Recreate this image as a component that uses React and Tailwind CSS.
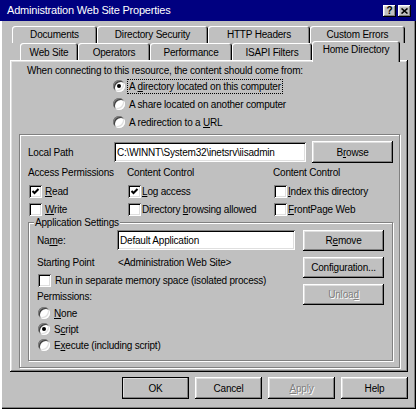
import React from 'react';

const raised =
  'shadow-[inset_-1px_-1px_0_#000,inset_1px_1px_0_#fff,inset_-2px_-2px_0_#808080,inset_2px_2px_0_#dfdfdf]';
const sunken =
  'shadow-[inset_1px_1px_0_#808080,inset_-1px_-1px_0_#fff,inset_2px_2px_0_#000,inset_-2px_-2px_0_#dfdfdf]';
const etched = 'border border-[#808080] shadow-[1px_1px_0_#fff,inset_1px_1px_0_#fff]';
const tabShadow = 'shadow-[inset_1px_1px_0_#fff,inset_-1px_0_0_#000,inset_-2px_0_0_#808080]';

function Button({ className = '', children, disabled, isDefault }) {
  return (
    <div
      className={`flex items-center justify-center bg-[#c0c0c0] ${raised} ${
        isDefault ? 'outline-1 outline-black -outline-offset-1' : ''
      } ${disabled ? 'text-[#808080] [text-shadow:1px_1px_0_#fff]' : ''} ${className}`}
    >
      {children}
    </div>
  );
}

function Check({ checked }) {
  return (
    <span className={`w-[13px] h-[13px] shrink-0 bg-white ${sunken} flex items-center justify-center`}>
      {checked && (
        <svg width="9" height="9" viewBox="0 0 9 9">
          <polyline points="1.5,4 3.5,6 7.5,2" fill="none" stroke="#000" strokeWidth="2" />
        </svg>
      )}
    </span>
  );
}

function Radio({ on }) {
  return (
    <span
      className="w-[12px] h-[12px] shrink-0 rounded-full bg-white flex items-center justify-center shadow-[inset_1px_1px_0_#808080,inset_-1px_-1px_0_#fff,inset_2px_2px_0_#404040,inset_-2px_-2px_0_#dfdfdf]"
    >
      {on && <span className="w-[4px] h-[4px] rounded-full bg-black" />}
    </span>
  );
}

function Tab({ className = '', children }) {
  return (
    <div className={`flex items-center justify-center rounded-t-[3px] bg-[#c0c0c0] ${tabShadow} ${className}`}>
      {children}
    </div>
  );
}

export default function App() {
  return (
    <div className="w-[416px] h-[409px] bg-[#c0c0c0] flex flex-col overflow-hidden font-['Liberation_Sans',Arial,sans-serif] text-[10px] leading-[13px] tracking-[-0.2px] text-black shadow-[inset_2px_0_0_#fff,inset_-1px_-1px_0_#000,inset_-2px_-2px_0_#808080]">
      {/* title bar */}
      <div className="h-[21px] shrink-0 bg-[#000080] flex items-center pl-[7px] pr-[5px] text-white">
        <span className="flex-1 text-[11px]">Administration Web Site Properties</span>
        <div className="flex gap-[2px]">
          <div className={`w-[13px] h-[12px] bg-[#c0c0c0] ${raised} flex items-center justify-center text-black font-bold text-[10px] leading-none`}>
            ?
          </div>
          <div className={`w-[13px] h-[12px] bg-[#c0c0c0] ${raised} flex items-center justify-center`}>
            <svg width="7" height="6" viewBox="0 0 7 6">
              <path d="M0.5 0.5 L6.5 5.5 M6.5 0.5 L0.5 5.5" stroke="#000" strokeWidth="1.6" />
            </svg>
          </div>
        </div>
      </div>

      <div className="pl-[10px] pt-[5px] flex flex-col">
        {/* back row of tabs */}
        <div className="flex ml-[2px] h-[17px]">
          <Tab className="w-[85px] h-[17px] pb-[1px]">Documents</Tab>
          <Tab className="w-[111px] h-[17px] pb-[1px]">Directory Security</Tab>
          <Tab className="w-[102px] h-[17px] pb-[1px]">HTTP Headers</Tab>
          <Tab className="w-[95px] h-[17px] pb-[1px]">Custom Errors</Tab>
        </div>
        {/* front row of tabs */}
        <div className="flex ml-[10px] h-[17px] items-end">
          <Tab className="w-[58px] h-[17px] pt-[2px]">Web Site</Tab>
          <Tab className="w-[72px] h-[17px] pt-[2px]">Operators</Tab>
          <Tab className="w-[82px] h-[17px] pt-[2px]">Performance</Tab>
          <Tab className="w-[80px] h-[17px] pt-[2px]">ISAPI Filters</Tab>
          <Tab className="relative z-10 w-[88px] h-[21px] -mb-[2px] pb-[4px]">Home Directory</Tab>
        </div>

        {/* tab page */}
        <div className={`relative w-[398px] h-[312px] flex flex-col ${raised}`}>
          <div className="pl-[17px] pt-[4px]">When connecting to this resource, the content should come from:</div>
          <div className="flex flex-col pl-[103px]">
            <div className="h-[18px] flex items-center gap-[3px]">
              <Radio on />
              <span className="px-[1px] [outline:1px_dotted_#000]">
                A <u>d</u>irectory located on this computer
              </span>
            </div>
            <div className="h-[18px] flex items-center gap-[3px]">
              <Radio />
              <span className="px-[1px]">A share located on another computer</span>
            </div>
            <div className="h-[18px] flex items-center gap-[3px]">
              <Radio />
              <span className="px-[1px]">
                A redirection to a <u>U</u>RL
              </span>
            </div>
          </div>

          {/* directory group */}
          <div className={`ml-[9px] mt-[3px] w-[381px] h-[234px] flex flex-col pl-[8px] pt-[6px] ${etched}`}>
            <div className="h-[22px] flex items-center">
              <span className="w-[86px]">Local Path</span>
              <div className={`w-[192px] h-[20px] bg-white ${sunken} flex items-center pl-[3px]`}>
                C:\WINNT\System32\inetsrv\iisadmin
              </div>
              <Button className="ml-[6px] w-[81px] h-[22px]">
                B<u>r</u>owse
              </Button>
            </div>

            <div className="mt-[3px] h-[13px] grid grid-cols-[99px_146px_1fr]">
              <span>Access Permissions</span>
              <span>Content Control</span>
              <span>Content Control</span>
            </div>
            <div className="mt-[3px] grid grid-cols-[99px_146px_1fr] pl-[1px]">
              <div className="h-[18px] flex items-center gap-[3px]">
                <Check checked />
                <span>
                  <u>R</u>ead
                </span>
              </div>
              <div className="h-[18px] flex items-center gap-[1px]">
                <Check checked />
                <span>
                  <u>L</u>og access
                </span>
              </div>
              <div className="h-[18px] flex items-center gap-[1px]">
                <Check />
                <span>
                  <u>I</u>ndex this directory
                </span>
              </div>
              <div className="h-[18px] flex items-center gap-[3px]">
                <Check />
                <span>
                  <u>W</u>rite
                </span>
              </div>
              <div className="h-[18px] flex items-center gap-[1px]">
                <Check />
                <span>
                  Directory <u>b</u>rowsing allowed
                </span>
              </div>
              <div className="h-[18px] flex items-center gap-[1px]">
                <Check />
                <span>
                  <u>F</u>rontPage Web
                </span>
              </div>
            </div>

            {/* application settings */}
            <div className={`relative mt-[4px] w-[365px] h-[139px] flex pt-[7px] pl-[8px] ${etched}`}>
              <span className="absolute -top-[7px] left-[5px] px-[1px] bg-[#c0c0c0]">Application Settings</span>
              <div className="w-[266px] flex flex-col">
                <div className="h-[20px] flex items-center">
                  <span className="w-[80px]">
                    Na<u>m</u>e:
                  </span>
                  <div className={`w-[178px] h-[20px] bg-white ${sunken} flex items-center pl-[3px]`}>
                    Default Application
                  </div>
                </div>
                <div className="mt-[6px] h-[13px] flex">
                  <span className="w-[81px]">Starting Point</span>
                  <span>&lt;Administration Web Site&gt;</span>
                </div>
                <div className="mt-[3px] h-[17px] flex items-center gap-[4px] pl-[1px]">
                  <Check />
                  <span>Run in separate memory space (isolated process)</span>
                </div>
                <div className="mt-[1px] h-[13px]">Permissions:</div>
                <div className="mt-[2px] flex flex-col pl-[1px]">
                  <div className="h-[16px] flex items-center gap-[4px]">
                    <Radio />
                    <span>
                      <u>N</u>one
                    </span>
                  </div>
                  <div className="h-[16px] flex items-center gap-[4px]">
                    <Radio on />
                    <span>
                      S<u>c</u>ript
                    </span>
                  </div>
                  <div className="h-[16px] flex items-center gap-[4px]">
                    <Radio />
                    <span>
                      E<u>x</u>ecute (including script)
                    </span>
                  </div>
                </div>
              </div>
              <div className="flex flex-col gap-[6px]">
                <Button className="w-[81px] h-[21px]">
                  R<u>e</u>move
                </Button>
                <Button className="w-[81px] h-[21px]">
                  Confi<u>g</u>uration...
                </Button>
                <Button className="w-[81px] h-[21px]" disabled>
                  Unloa<u>d</u>
                </Button>
              </div>
            </div>
          </div>
        </div>

        {/* dialog buttons */}
        <div className="mt-[5px] pl-[112px] flex gap-[6px]">
          <Button className="w-[67px] h-[22px]" isDefault>
            OK
          </Button>
          <Button className="w-[67px] h-[22px]">Cancel</Button>
          <Button className="w-[67px] h-[22px]" disabled>
            <u>A</u>pply
          </Button>
          <Button className="w-[67px] h-[22px]">Help</Button>
        </div>
      </div>
    </div>
  );
}
